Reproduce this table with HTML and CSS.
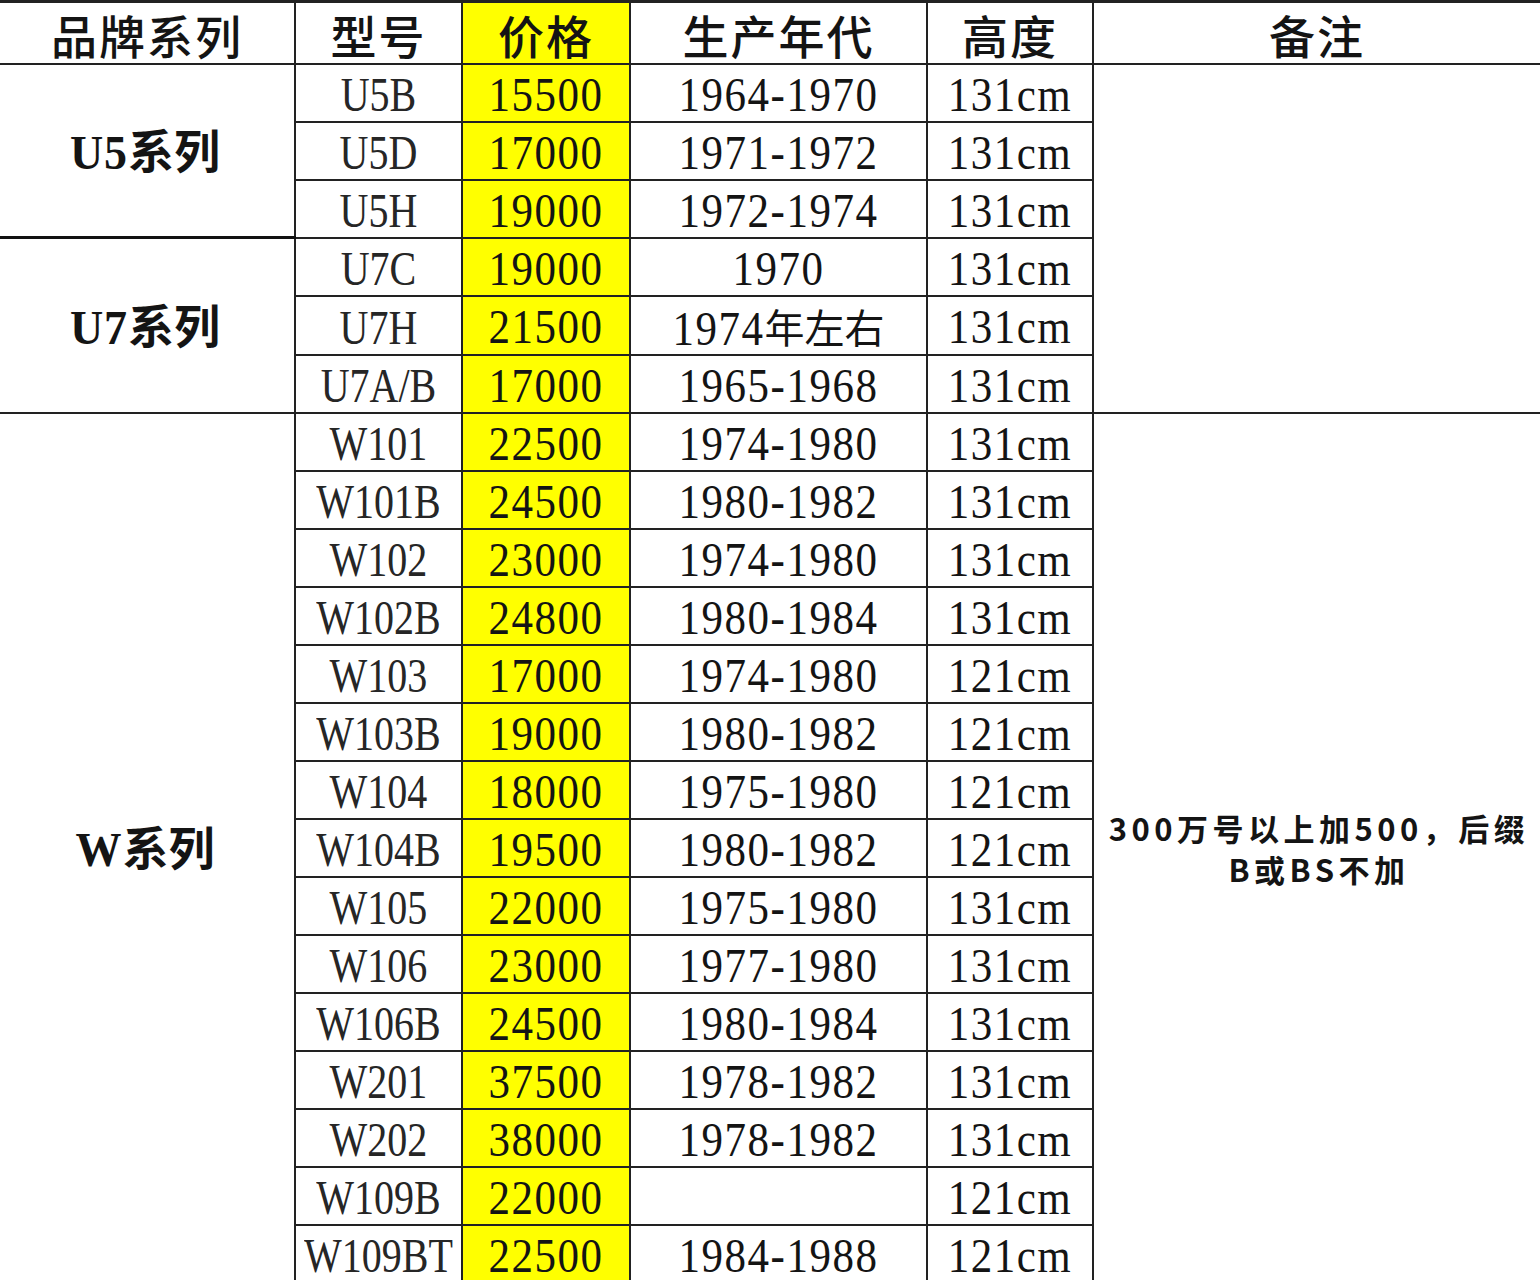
FILE: index.html
```html
<!DOCTYPE html>
<html lang="zh-CN">
<head>
<meta charset="utf-8">
<title>品牌系列价格表</title>
<link rel="stylesheet" href="styles.css">
</head>
<body>
<table class="grid">
  <colgroup>
    <col class="c1"><col class="c2"><col class="c3"><col class="c4"><col class="c5"><col class="c6">
  </colgroup>
  <thead>
    <tr>
      <th>品牌系列</th><th>型号</th><th class="price">价格</th><th>生产年代</th><th>高度</th><th class="note-h">备注</th>
    </tr>
  </thead>
  <tbody>
    <tr>
      <td rowspan="3" class="brand g1"><span class="n b">U5</span>系列</td>
      <td class="model"><span class="n">U5B</span></td><td class="price"><span class="n">15500</span></td><td><span class="n">1964-1970</span></td><td><span class="n">131cm</span></td>
      <td rowspan="6" class="note"></td>
    </tr>
    <tr><td class="model"><span class="n">U5D</span></td><td class="price"><span class="n">17000</span></td><td><span class="n">1971-1972</span></td><td><span class="n">131cm</span></td></tr>
    <tr><td class="model"><span class="n">U5H</span></td><td class="price"><span class="n">19000</span></td><td><span class="n">1972-1974</span></td><td><span class="n">131cm</span></td></tr>
    <tr>
      <td rowspan="3" class="brand g2"><span class="n b">U7</span>系列</td>
      <td class="model"><span class="n">U7C</span></td><td class="price"><span class="n">19000</span></td><td><span class="n">1970</span></td><td><span class="n">131cm</span></td>
    </tr>
    <tr><td class="model"><span class="n">U7H</span></td><td class="price"><span class="n">21500</span></td><td><span class="n">1974</span><span class="cjk">年左右</span></td><td><span class="n">131cm</span></td></tr>
    <tr><td class="model"><span class="n">U7A/B</span></td><td class="price"><span class="n">17000</span></td><td><span class="n">1965-1968</span></td><td><span class="n">131cm</span></td></tr>
    <tr>
      <td rowspan="15" class="brand g3"><span class="n b">W</span>系列</td>
      <td class="model"><span class="n">W101</span></td><td class="price"><span class="n">22500</span></td><td><span class="n">1974-1980</span></td><td><span class="n">131cm</span></td>
      <td rowspan="15" class="note remark">300万号以上加500，后缀<br>B或BS不加</td>
    </tr>
    <tr><td class="model"><span class="n">W101B</span></td><td class="price"><span class="n">24500</span></td><td><span class="n">1980-1982</span></td><td><span class="n">131cm</span></td></tr>
    <tr><td class="model"><span class="n">W102</span></td><td class="price"><span class="n">23000</span></td><td><span class="n">1974-1980</span></td><td><span class="n">131cm</span></td></tr>
    <tr><td class="model"><span class="n">W102B</span></td><td class="price"><span class="n">24800</span></td><td><span class="n">1980-1984</span></td><td><span class="n">131cm</span></td></tr>
    <tr><td class="model"><span class="n">W103</span></td><td class="price"><span class="n">17000</span></td><td><span class="n">1974-1980</span></td><td><span class="n">121cm</span></td></tr>
    <tr><td class="model"><span class="n">W103B</span></td><td class="price"><span class="n">19000</span></td><td><span class="n">1980-1982</span></td><td><span class="n">121cm</span></td></tr>
    <tr><td class="model"><span class="n">W104</span></td><td class="price"><span class="n">18000</span></td><td><span class="n">1975-1980</span></td><td><span class="n">121cm</span></td></tr>
    <tr><td class="model"><span class="n">W104B</span></td><td class="price"><span class="n">19500</span></td><td><span class="n">1980-1982</span></td><td><span class="n">121cm</span></td></tr>
    <tr><td class="model"><span class="n">W105</span></td><td class="price"><span class="n">22000</span></td><td><span class="n">1975-1980</span></td><td><span class="n">131cm</span></td></tr>
    <tr><td class="model"><span class="n">W106</span></td><td class="price"><span class="n">23000</span></td><td><span class="n">1977-1980</span></td><td><span class="n">131cm</span></td></tr>
    <tr><td class="model"><span class="n">W106B</span></td><td class="price"><span class="n">24500</span></td><td><span class="n">1980-1984</span></td><td><span class="n">131cm</span></td></tr>
    <tr><td class="model"><span class="n">W201</span></td><td class="price"><span class="n">37500</span></td><td><span class="n">1978-1982</span></td><td><span class="n">131cm</span></td></tr>
    <tr><td class="model"><span class="n">W202</span></td><td class="price"><span class="n">38000</span></td><td><span class="n">1978-1982</span></td><td><span class="n">131cm</span></td></tr>
    <tr><td class="model"><span class="n">W109B</span></td><td class="price"><span class="n">22000</span></td><td></td><td><span class="n">121cm</span></td></tr>
    <tr><td class="model"><span class="n">W109BT</span></td><td class="price"><span class="n">22500</span></td><td><span class="n">1984-1988</span></td><td><span class="n">121cm</span></td></tr>
  </tbody>
</table>
</body>
</html>
```

FILE: styles.css
```css
html, body {
  margin: 0;
  padding: 0;
  background: #ffffff;
}

.grid {
  width: 1540px;
  table-layout: fixed;
  border-collapse: collapse;
  font-family: "Liberation Serif", "Noto Sans CJK SC", serif;
  color: #141414;
}

.c1 { width: 295px; }
.c2 { width: 167px; }
.c3 { width: 168px; }
.c4 { width: 297px; }
.c5 { width: 166px; }
.c6 { width: 447px; }

.grid th,
.grid td {
  border: 2px solid #222;
  padding: 0;
  text-align: center;
  vertical-align: middle;
  white-space: nowrap;
}

.grid thead tr { height: 62px; }
.grid tbody tr { height: 58px; }

.grid th {
  border-top: 3px solid #222;
  font-family: "Noto Sans CJK SC", sans-serif;
  font-weight: 500;
  font-size: 46px;
  line-height: 56px;
  padding-top: 2px;
  letter-spacing: 2px;
}

.grid th:first-child,
.grid td.brand {
  border-left: 0;
}

.grid th.note-h,
.grid td.note {
  border-right: 0;
}

.grid td {
  font-size: 43px;
  line-height: 50px;
  padding-top: 4px;
  font-family: "Liberation Serif", "Noto Sans CJK SC", serif;
}

.price {
  background: #ffff00;
}

.n {
  display: inline-block;
  transform: scaleY(1.12);
  font-family: "Liberation Serif", serif;
  letter-spacing: 1.5px;
}

.cjk {
  font-family: "Noto Sans CJK SC", sans-serif;
  font-size: 40px;
}

.grid td.model {
  color: #262626;
}

.grid td.model .n {
  font-size: 40px;
  letter-spacing: 0;
  transform: scaleY(1.2);
}

.n.b {
  font-weight: 700;
  letter-spacing: 1px;
  transform: scaleY(1.05);
}

.grid td.brand {
  font-family: "Noto Sans CJK SC", sans-serif;
  font-weight: 700;
  font-size: 46px;
  padding-top: 0;
  padding-right: 4px;
}

.grid td.g1 { border-bottom: 3px solid #111; }
.grid td.g2 { border-bottom: 2px solid #222; }

.grid td.note {
  border-left: 2px solid #222;
}

.grid td.remark {
  font-family: "Noto Sans CJK SC", sans-serif;
  font-weight: 700;
  font-size: 31px;
  line-height: 41px;
  letter-spacing: 4.5px;
  white-space: normal;
  padding-top: 0;
  padding-left: 4px;
}
```
